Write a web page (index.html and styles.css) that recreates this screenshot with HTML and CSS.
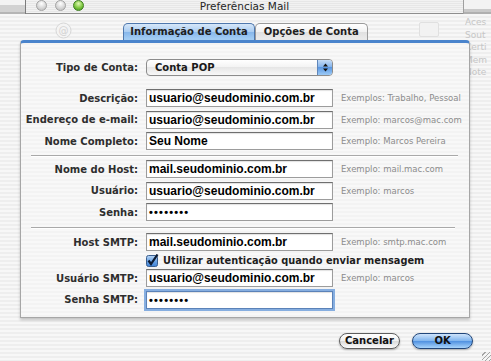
FILE: index.html
```html
<!DOCTYPE html>
<html lang="pt">
<head>
  <meta charset="UTF-8" />
  <title>Preferências Mail</title>
  <link rel="stylesheet" href="styles.css">
</head>
<body>

  <div class="titlebar">
    <div class="title-ghost"></div>
    <div class="title-main">
      <div class="lights">
        <span class="light"></span>
        <span class="light"></span>
        <span class="light light-zoom"></span>
      </div>
      <div class="title-text">Preferências Mail</div>
      <div></div>
    </div>
    <div class="title-ghost title-ghost-right"></div>
  </div>

  <div class="tabbar">
    <div class="ghost-icon">
      <svg width="17" height="17" viewBox="0 0 17 17">
        <circle cx="8.5" cy="8.5" r="7.5" fill="#f4f4f4" stroke="#d6d6d6" />
        <text x="8.5" y="12" text-anchor="middle" font-size="10" font-family="DejaVu Sans" fill="#d2d2d2">@</text>
      </svg>
    </div>
    <div class="tabs">
      <div class="tab tab-active">Informação de Conta</div>
      <div class="tab tab-second">Opções de Conta</div>
    </div>
    <div class="ghost-right">
      <div class="ghost-box"></div>
      <div class="ghost-text">Aces<br>Sout<br>Certi<br>Mem<br>Note</div>
    </div>
  </div>

  <section class="panel">
    <div class="row row-popup">
      <span class="label">Tipo de Conta:</span>
      <div class="popup">
        <span>Conta POP</span>
        <span class="popup-arrows">
          <svg width="7" height="9" viewBox="0 0 7 9">
            <path d="M3.5 0.5 L6 3.5 L1 3.5 Z M3.5 8.5 L6 5.5 L1 5.5 Z" fill="#111" />
          </svg>
        </span>
      </div>
    </div>

    <div class="group group-first">
      <div class="row">
        <span class="label">Descrição:</span>
        <div class="field">usuario@seudominio.com.br</div>
        <span class="hint">Exemplos: Trabalho, Pessoal</span>
      </div>
      <div class="row">
        <span class="label">Endereço de e-mail:</span>
        <div class="field">usuario@seudominio.com.br</div>
        <span class="hint">Exemplo: marcos@mac.com</span>
      </div>
      <div class="row">
        <span class="label">Nome Completo:</span>
        <div class="field">Seu Nome</div>
        <span class="hint">Exemplo: Marcos Pereira</span>
      </div>
    </div>

    <div class="separator"></div>

    <div class="group">
      <div class="row">
        <span class="label">Nome do Host:</span>
        <div class="field">mail.seudominio.com.br</div>
        <span class="hint">Exemplo: mail.mac.com</span>
      </div>
      <div class="row">
        <span class="label">Usuário:</span>
        <div class="field">usuario@seudominio.com.br</div>
        <span class="hint">Exemplo: marcos</span>
      </div>
      <div class="row">
        <span class="label">Senha:</span>
        <div class="field field-secret">••••••••</div>
      </div>
    </div>

    <div class="separator separator-second"></div>

    <div class="group">
      <div class="row">
        <span class="label">Host SMTP:</span>
        <div class="field">mail.seudominio.com.br</div>
        <span class="hint">Exemplo: smtp.mac.com</span>
      </div>
      <div class="row row-check">
        <div class="check">
          <svg width="13" height="13" viewBox="0 0 13 13">
            <defs>
              <linearGradient id="checkFill" x1="0" y1="0" x2="0" y2="1">
                <stop offset="0" stop-color="#bcd8f6" />
                <stop offset="0.5" stop-color="#6da5e6" />
                <stop offset="1" stop-color="#3f82d6" />
              </linearGradient>
            </defs>
            <rect x="0.5" y="1.5" width="11" height="11" rx="2" fill="url(#checkFill)" stroke="#3b5f8f" />
            <path d="M2.5 6.5 L5 10 L11.5 0.5" fill="none" stroke="#0d1b33" stroke-width="2.2" />
          </svg>
          <span>Utilizar autenticação quando enviar mensagem</span>
        </div>
      </div>
      <div class="row">
        <span class="label">Usuário SMTP:</span>
        <div class="field">usuario@seudominio.com.br</div>
        <span class="hint">Exemplo: marcos</span>
      </div>
      <div class="row">
        <span class="label">Senha SMTP:</span>
        <div class="field field-secret field-focus">••••••••</div>
      </div>
    </div>
  </section>

  <div class="actions">
    <button class="btn">Cancelar</button>
    <button class="btn btn-default">OK</button>
    <div class="grip"></div>
  </div>

</body>
</html>
```

FILE: styles.css
```css
:root {
  --label-color: #2e2e2e;
  --hint-color: #8c8c8c;
  --aqua-blue: #4a84cc;
  --font-ui: "DejaVu Sans", Verdana, sans-serif;
  --font-field: "Liberation Sans", Arial, sans-serif;
}

* {
  margin: 0;
  padding: 0;
  box-sizing: border-box;
}

body {
  width: 491px;
  height: 361px;
  overflow: hidden;
  font-family: var(--font-ui);
  color: var(--label-color);
  background: repeating-linear-gradient(#eeeeee 0 2px, #f7f7f7 2px 4px);
}

/* title bar */
.titlebar {
  display: flex;
  height: 14px;
}

.title-ghost {
  width: 26px;
  background: linear-gradient(#f3f3f3 0 5px, #d2d2d2 5px 12px, #b5b5b5 12px);
  border-right: 1px solid #7c7c7c;
}

.title-ghost-right {
  flex: 1;
  border-right: none;
  border-left: 1px solid #a0a0a0;
  background: linear-gradient(#f3f3f3 0 9px, #c9c9c9 9px 12px, #b0b0b0 12px);
}

.title-main {
  width: 437px;
  display: grid;
  grid-template-columns: 1fr auto 1fr;
  align-items: start;
  background: repeating-linear-gradient(#f2f2f2 0 1px, #e7e7e7 1px 2px);
  border-bottom: 1px solid #8e8e8e;
}

.lights {
  display: flex;
  gap: 7.5px;
  padding-left: 10px;
}

.light {
  width: 11px;
  height: 11px;
  border-radius: 50%;
  border: 1px solid #a2a2a2;
  background: radial-gradient(circle at 50% 30%, #ffffff, #d4d4d4 60%, #bdbdbd);
}

.light-zoom {
  border-color: #3d7d1e;
  background: radial-gradient(circle at 50% 30%, #e0f8b4, #7cc63e 55%, #3f8f1f);
}

.title-text {
  font-size: 10.5px;
  line-height: 12px;
  color: #262626;
}

/* tabs */
.tabbar {
  display: grid;
  grid-template-columns: 1fr auto 1fr;
  grid-template-rows: 17px;
  margin-top: 9px;
}

.ghost-icon {
  padding-left: 55px;
  margin-top: -1px;
}

.ghost-right {
  display: flex;
  align-items: flex-start;
  padding-left: 51px;
}

.ghost-box {
  width: 20px;
  height: 15px;
  margin-top: -1px;
  border: 1px solid #e0e0e0;
  border-radius: 2px;
  background: #f2f2f2;
}

.ghost-text {
  margin-left: auto;
  width: 26px;
  margin-top: -7px;
  overflow: hidden;
  white-space: nowrap;
  font-size: 9px;
  line-height: 12.5px;
  color: #c6c6c6;
}

.tabs {
  display: flex;
}

.tab {
  height: 17px;
  padding: 0 6px;
  font-size: 10px;
  font-weight: bold;
  line-height: 16px;
  color: #1e1e1e;
  border: 1px solid #9a9a9a;
  border-bottom: none;
  border-radius: 5px 5px 0 0;
  background: linear-gradient(#ffffff, #f1f1f1 50%, #e0e0e0 50%, #ececec);
}

.tab-second {
  padding: 0 8px;
}

.tab-active {
  border-color: #4f78ad;
  background: linear-gradient(#d6e7f9, #a9ccf1 50%, #86b6ea 50%, #a7d0f5);
}

/* panel */
.panel {
  position: relative;
  margin: 0 21px 0 20px;
  padding: 16px 0 8px;
  border: 1px solid #a6a6a6;
  border-top: 3px solid var(--aqua-blue);
  border-radius: 4px 4px 0 0;
  background: repeating-linear-gradient(#f3f3f3 0 2px, #f8f8f8 2px 4px);
  box-shadow: 0 2px 3px rgba(0, 0, 0, 0.22);
}

.row {
  display: grid;
  grid-template-columns: 117px 187px 1fr;
  column-gap: 8px;
  align-items: center;
  height: 18px;
}

.row + .row {
  margin-top: 3.5px;
}

.row-popup {
  height: 17px;
}

.label {
  text-align: right;
  font-size: 10px;
  font-weight: bold;
  white-space: nowrap;
  color: var(--label-color);
}

.field {
  height: 18px;
  padding: 0 2px;
  font-family: var(--font-field);
  font-size: 12px;
  font-weight: bold;
  line-height: 16px;
  color: #000;
  background: #fff;
  border: 1px solid #9c9c9c;
  border-top-color: #6f6f6f;
  box-shadow: inset 0 1px 1px rgba(0, 0, 0, 0.12);
  white-space: nowrap;
  overflow: hidden;
}

.field-secret {
  font-size: 11px;
  letter-spacing: 1.2px;
}

.field-focus {
  box-shadow: 0 0 0 2px #86aee0, inset 0 1px 1px rgba(0, 0, 0, 0.12);
  border-color: #5b82b8;
}

.hint {
  font-size: 8.5px;
  white-space: nowrap;
  color: var(--hint-color);
}

.popup {
  display: flex;
  align-items: center;
  justify-content: space-between;
  height: 17px;
  padding-left: 8px;
  font-size: 10px;
  font-weight: bold;
  color: #1a1a1a;
  border: 1px solid #8c8c8c;
  border-radius: 4px;
  background: linear-gradient(#ffffff, #f3f3f3 50%, #e6e6e6 50%, #f8f8f8);
  overflow: hidden;
}

.popup-arrows {
  display: flex;
  align-items: center;
  justify-content: center;
  width: 15px;
  height: 100%;
  border-left: 1px solid #5f86ba;
  background: linear-gradient(#c6ddf7, #7fb0ea 50%, #5a97e2 50%, #9ccaf6);
}

.group-first {
  margin-top: 13px;
}

.separator {
  height: 2px;
  margin: 5px 11px 3px 10px;
  border-top: 1px solid #a9a9a9;
  border-bottom: 1px solid #ffffff;
}

.separator-second {
  margin: 6px 14px 4px 10px;
}

.row-check {
  height: 14px;
}

.row + .row-check,
.row-check + .row {
  margin-top: 2px;
}

.check {
  grid-column: 2 / 4;
  display: flex;
  align-items: center;
  gap: 4px;
  font-size: 9.8px;
  font-weight: bold;
  color: #1e1e1e;
  white-space: nowrap;
}

/* buttons */
.actions {
  display: flex;
  justify-content: flex-end;
  gap: 12px;
  margin-top: 15px;
  height: 28px;
}

.btn {
  width: 61px;
  height: 16px;
  font-family: var(--font-ui);
  font-size: 10px;
  font-weight: bold;
  color: #111;
  border: 1px solid #5e5e5e;
  border-radius: 8px;
  background: linear-gradient(#ffffff, #f0f0f0 50%, #d9d9d9 50%, #fbfbfb);
  box-shadow: 0 1px 2px rgba(0, 0, 0, 0.3);
}

.btn-default {
  border-color: #21467a;
  background: linear-gradient(#cfe4fb, #7fb4ee 50%, #4d8fe0 50%, #a8d4fb);
}

.grip {
  align-self: flex-end;
  width: 9px;
  height: 9px;
  margin-left: -3px;
  background: repeating-linear-gradient(135deg, transparent 0 2px, #a5a5a5 2px 3px);
}
```
